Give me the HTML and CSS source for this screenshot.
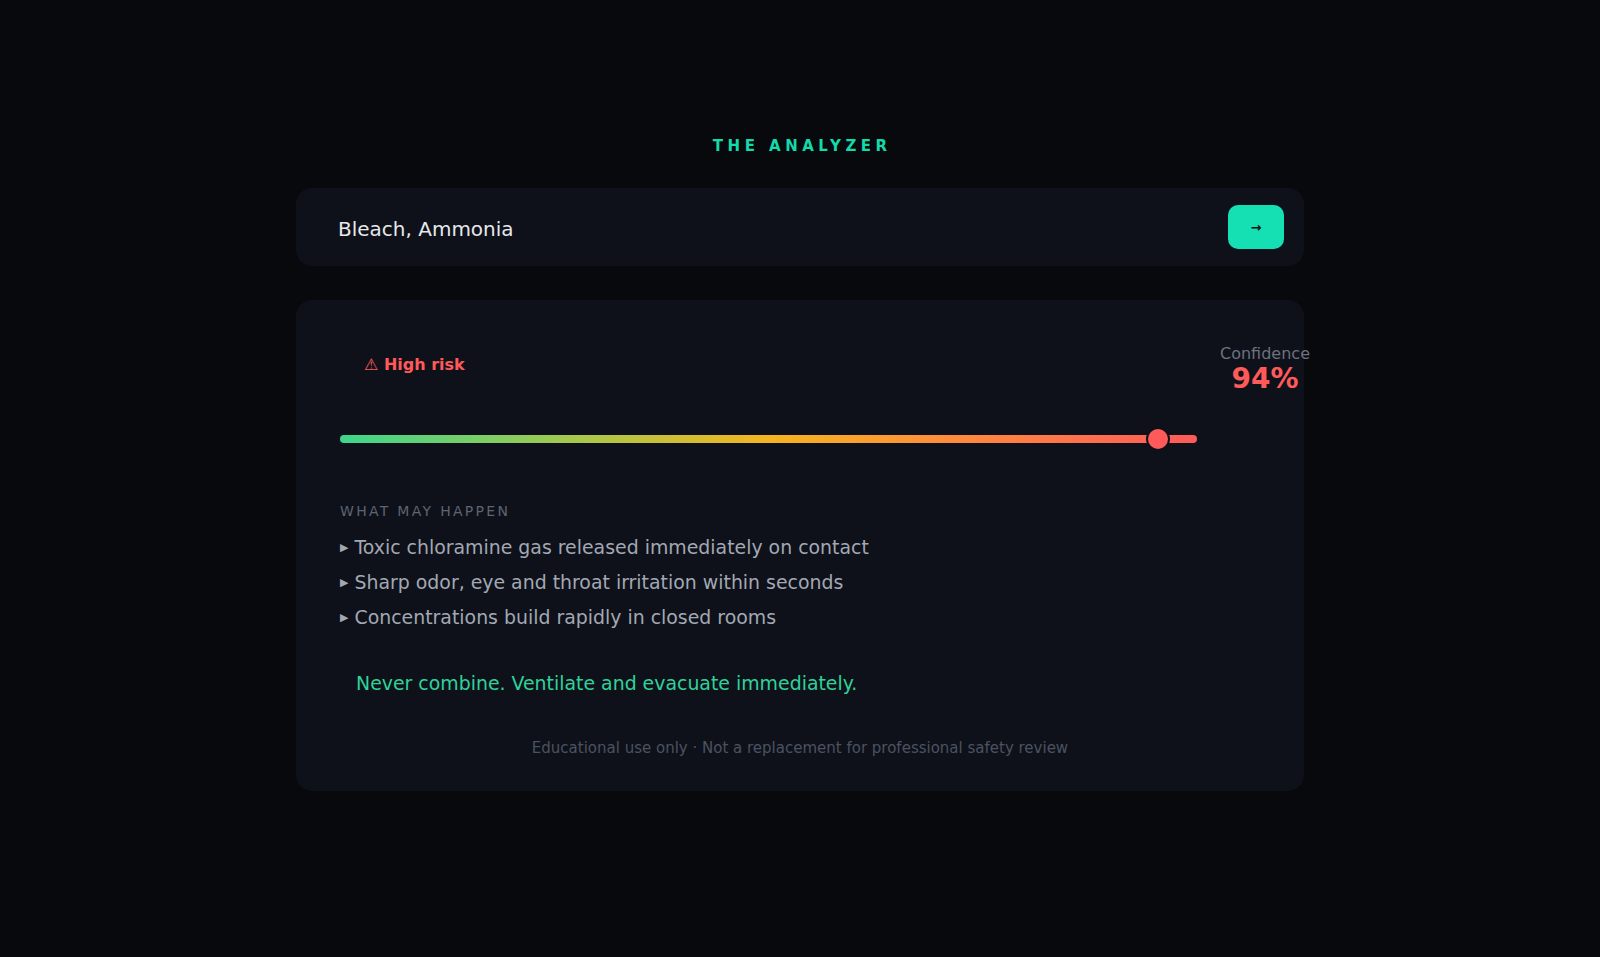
FILE: index.html
```html
<!DOCTYPE html>
<html lang="en">
<head>
    <meta charset="UTF-8">
    <meta name="viewport" content="width=device-width, initial-scale=1.0">
    <title>The Analyzer</title>
    <link rel="stylesheet" href="styles.css">
</head>
<body>

<div class="analyzer">
    <h1 class="title">THE ANALYZER</h1>

    <div class="search-box">
        <input type="text" class="search-input" value="Bleach, Ammonia">
        <button class="search-button">→</button>
    </div>

    <div class="result">
        <div class="gauge">
            <div class="gauge-main">
                <span class="badge">⚠ High risk</span>
                <div class="track">
                    <div class="thumb" style="left: 94%"></div>
                </div>
            </div>
            <div class="confidence">
                <span class="confidence-label">Confidence</span>
                <span class="confidence-value">94%</span>
            </div>
        </div>

        <h2 class="section-title">WHAT MAY HAPPEN</h2>
        <ul class="effects">
            <li><span class="bullet">▶</span>Toxic chloramine gas released immediately on contact</li>
            <li><span class="bullet">▶</span>Sharp odor, eye and throat irritation within seconds</li>
            <li><span class="bullet">▶</span>Concentrations build rapidly in closed rooms</li>
        </ul>

        <p class="advice">Never combine. Ventilate and evacuate immediately.</p>

        <p class="disclaimer">Educational use only · Not a replacement for professional safety review</p>
    </div>
</div>

</body>
</html>
```

FILE: styles.css
```css
body {
    margin: 0;
    min-height: 100vh;
    background-color: #07090d;
    font-family: "DejaVu Sans", "Liberation Sans", sans-serif;
    color: #e6e8ec;
}

.analyzer {
    width: 1008px;
    margin: 0 auto;
    padding-top: 137px;
}

.title {
    margin: 0 0 33px;
    font-size: 15px;
    line-height: 18px;
    font-weight: bold;
    letter-spacing: 0.3em;
    text-indent: 0.3em;
    text-align: center;
    color: #14d9a8;
}

.search-box {
    display: flex;
    align-items: center;
    height: 78px;
    box-sizing: border-box;
    padding: 0 20px 0 42px;
    background-color: #0e1119;
    border-radius: 16px;
}

.search-input {
    flex: 1;
    border: none;
    outline: none;
    background: transparent;
    padding: 4px 0 0;
    font-family: inherit;
    font-size: 20px;
    color: #e6e8ec;
}

.search-button {
    width: 56px;
    height: 44px;
    border: none;
    border-radius: 10px;
    background-color: #14e0b4;
    color: #0a0f14;
    font-family: inherit;
    font-size: 13px;
    font-weight: bold;
    cursor: pointer;
}

.result {
    margin-top: 34px;
    padding: 40px 44px 34px;
    background-color: #0e1119;
    border-radius: 16px;
}

.gauge {
    display: grid;
    grid-template-columns: 1fr 64px;
    column-gap: 36px;
    margin-right: -37px;
}

.badge {
    display: inline-block;
    margin-top: 15px;
    padding: 0 24px;
    font-size: 16px;
    line-height: 20px;
    font-weight: bold;
    color: #ff5a5a;
}

.track {
    position: relative;
    height: 8px;
    margin-top: 60px;
    border-radius: 4px;
    background: linear-gradient(90deg, #3dd68c 0%, #a8c84a 28%, #f5b51f 50%, #ff8a3c 72%, #ff5a5a 100%);
}

.thumb {
    position: absolute;
    top: 50%;
    width: 20px;
    height: 20px;
    border: 2px solid #0e1119;
    border-radius: 50%;
    background-color: #ff5a5a;
    transform: translateY(-50%);
}

.confidence {
    display: flex;
    flex-direction: column;
    align-items: center;
    padding-top: 4px;
}

.confidence-label {
    font-size: 16px;
    line-height: 19px;
    color: #6b7280;
    white-space: nowrap;
}

.confidence-value {
    font-size: 28px;
    line-height: 32px;
    font-weight: bold;
    color: #ff5a5a;
}

.section-title {
    margin: 60px 0 0;
    font-size: 14px;
    line-height: 17px;
    font-weight: normal;
    letter-spacing: 2.3px;
    color: #5d6472;
}

.effects {
    list-style: none;
    margin: 14px 0 0;
    padding: 0;
}

.effects li {
    display: flex;
    align-items: center;
    gap: 6px;
    font-size: 18.9px;
    line-height: 27px;
    color: #a2a8b4;
}

.effects li + li {
    margin-top: 8px;
}

.bullet {
    font-size: 11px;
}

.advice {
    margin: 27px 0 0;
    padding: 12px 16px;
    font-size: 18.9px;
    line-height: 27px;
    color: #2ed39a;
}

.disclaimer {
    margin: 30px 0 0;
    font-size: 15px;
    line-height: 18px;
    text-align: center;
    color: #4b5261;
}
```
